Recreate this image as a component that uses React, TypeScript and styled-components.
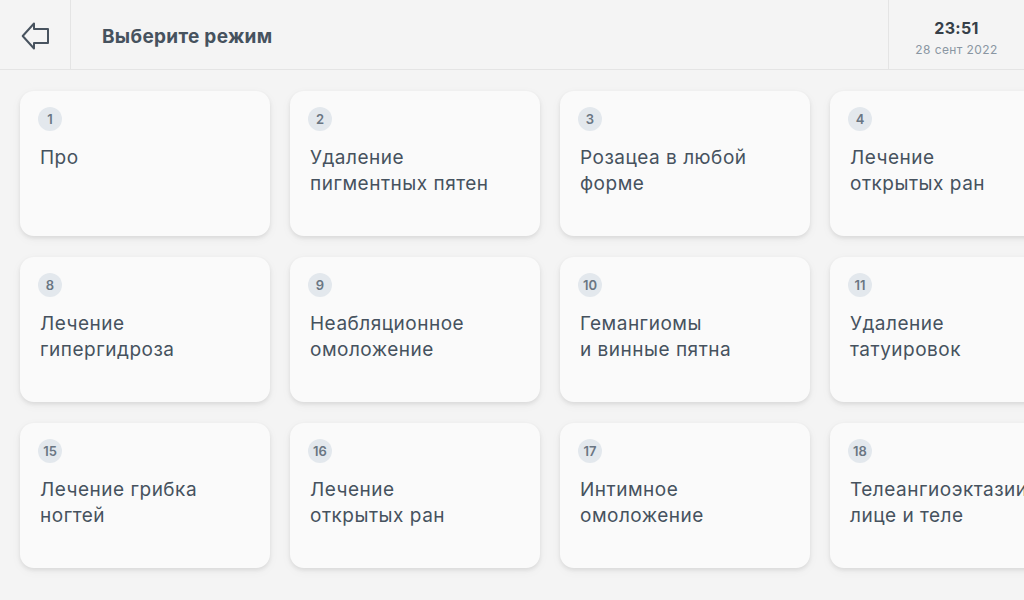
import React from "react";
import styled, { createGlobalStyle } from "styled-components";

const Global = createGlobalStyle`
  html, body { margin: 0; padding: 0; }
  body {
    background: #f4f4f4;
    font-family: Inter, "Noto Sans", sans-serif;
    width: 1024px;
    height: 600px;
    overflow: hidden;
  }
`;

const Page = styled.div`
  width: 1024px;
  height: 600px;
  display: flex;
  flex-direction: column;
  overflow: hidden;
  background: #f4f4f4;
`;

const Header = styled.header`
  height: 69px;
  display: flex;
  align-items: stretch;
  border-bottom: 1px solid #e4e4e4;
  flex-shrink: 0;
`;

const BackButton = styled.button`
  width: 71px;
  border: none;
  border-right: 1px solid #e4e4e4;
  background: transparent;
  display: flex;
  align-items: center;
  justify-content: center;
  padding: 3px 0 0 0;
  cursor: pointer;
`;

const Title = styled.h1`
  flex: 1;
  margin: 0;
  padding-left: 31px;
  padding-top: 4px;
  display: flex;
  align-items: center;
  font-size: 19px;
  font-weight: 700;
  color: #46525e;
  letter-spacing: 0.3px;
`;

const Clock = styled.div`
  width: 136px;
  border-left: 1px solid #e4e4e4;
  display: flex;
  flex-direction: column;
  align-items: center;
  justify-content: center;
  gap: 4px;
  padding-top: 5px;
  box-sizing: border-box;
`;

const Time = styled.div`
  font-size: 16px;
  font-weight: 700;
  color: #363f48;
  letter-spacing: 0.3px;
`;

const DateText = styled.div`
  font-size: 12px;
  color: #8a96a2;
  letter-spacing: 0.4px;
`;

const Grid = styled.div`
  display: grid;
  grid-template-columns: repeat(4, 250px);
  grid-auto-rows: 145px;
  column-gap: 20px;
  row-gap: 21px;
  padding: 21px 20px 0 20px;
`;

const Card = styled.div`
  background: #fafafa;
  border-radius: 14px;
  box-shadow: 0 2px 4px rgba(0, 0, 0, 0.09), 0 3px 12px rgba(0, 0, 0, 0.04);
  padding: 16px 18px 0 18px;
  display: flex;
  flex-direction: column;
  align-items: flex-start;
  gap: 14px;
  box-sizing: border-box;
  overflow: hidden;
`;

const Badge = styled.div`
  width: 24px;
  height: 24px;
  border-radius: 50%;
  background: #e3e8ed;
  color: #6a7683;
  font-size: 13px;
  font-weight: 600;
  display: flex;
  align-items: center;
  justify-content: center;
`;

const Label = styled.div`
  font-size: 19px;
  line-height: 26px;
  letter-spacing: 0.5px;
  color: #46525e;
  padding-left: 2px;
  white-space: pre;
`;

const BackIcon = () => (
  <svg width="30" height="28" viewBox="0 0 30 28" fill="none">
    <path
      d="M2.7 14 L14 1.5 L14 7 L28 7 L28 21 L14 21 L14 26.5 Z"
      stroke="#48535f"
      strokeWidth="2"
      strokeLinejoin="round"
    />
  </svg>
);

const modes: [number, string][] = [
  [1, "Про"],
  [2, "Удаление\nпигментных пятен"],
  [3, "Розацеа в любой\nформе"],
  [4, "Лечение\nоткрытых ран"],
  [8, "Лечение\nгипергидроза"],
  [9, "Неабляционное\nомоложение"],
  [10, "Гемангиомы\nи винные пятна"],
  [11, "Удаление\nтатуировок"],
  [15, "Лечение грибка\nногтей"],
  [16, "Лечение\nоткрытых ран"],
  [17, "Интимное\nомоложение"],
  [18, "Телеангиоэктазии на\nлице и теле"],
];

export default function App() {
  return (
    <Page>
      <Global />
      <Header>
        <BackButton aria-label="Назад">
          <BackIcon />
        </BackButton>
        <Title>Выберите режим</Title>
        <Clock>
          <Time>23:51</Time>
          <DateText>28 сент 2022</DateText>
        </Clock>
      </Header>
      <Grid>
        {modes.map(([n, t]) => (
          <Card key={n}>
            <Badge>{n}</Badge>
            <Label>{t}</Label>
          </Card>
        ))}
      </Grid>
    </Page>
  );
}
